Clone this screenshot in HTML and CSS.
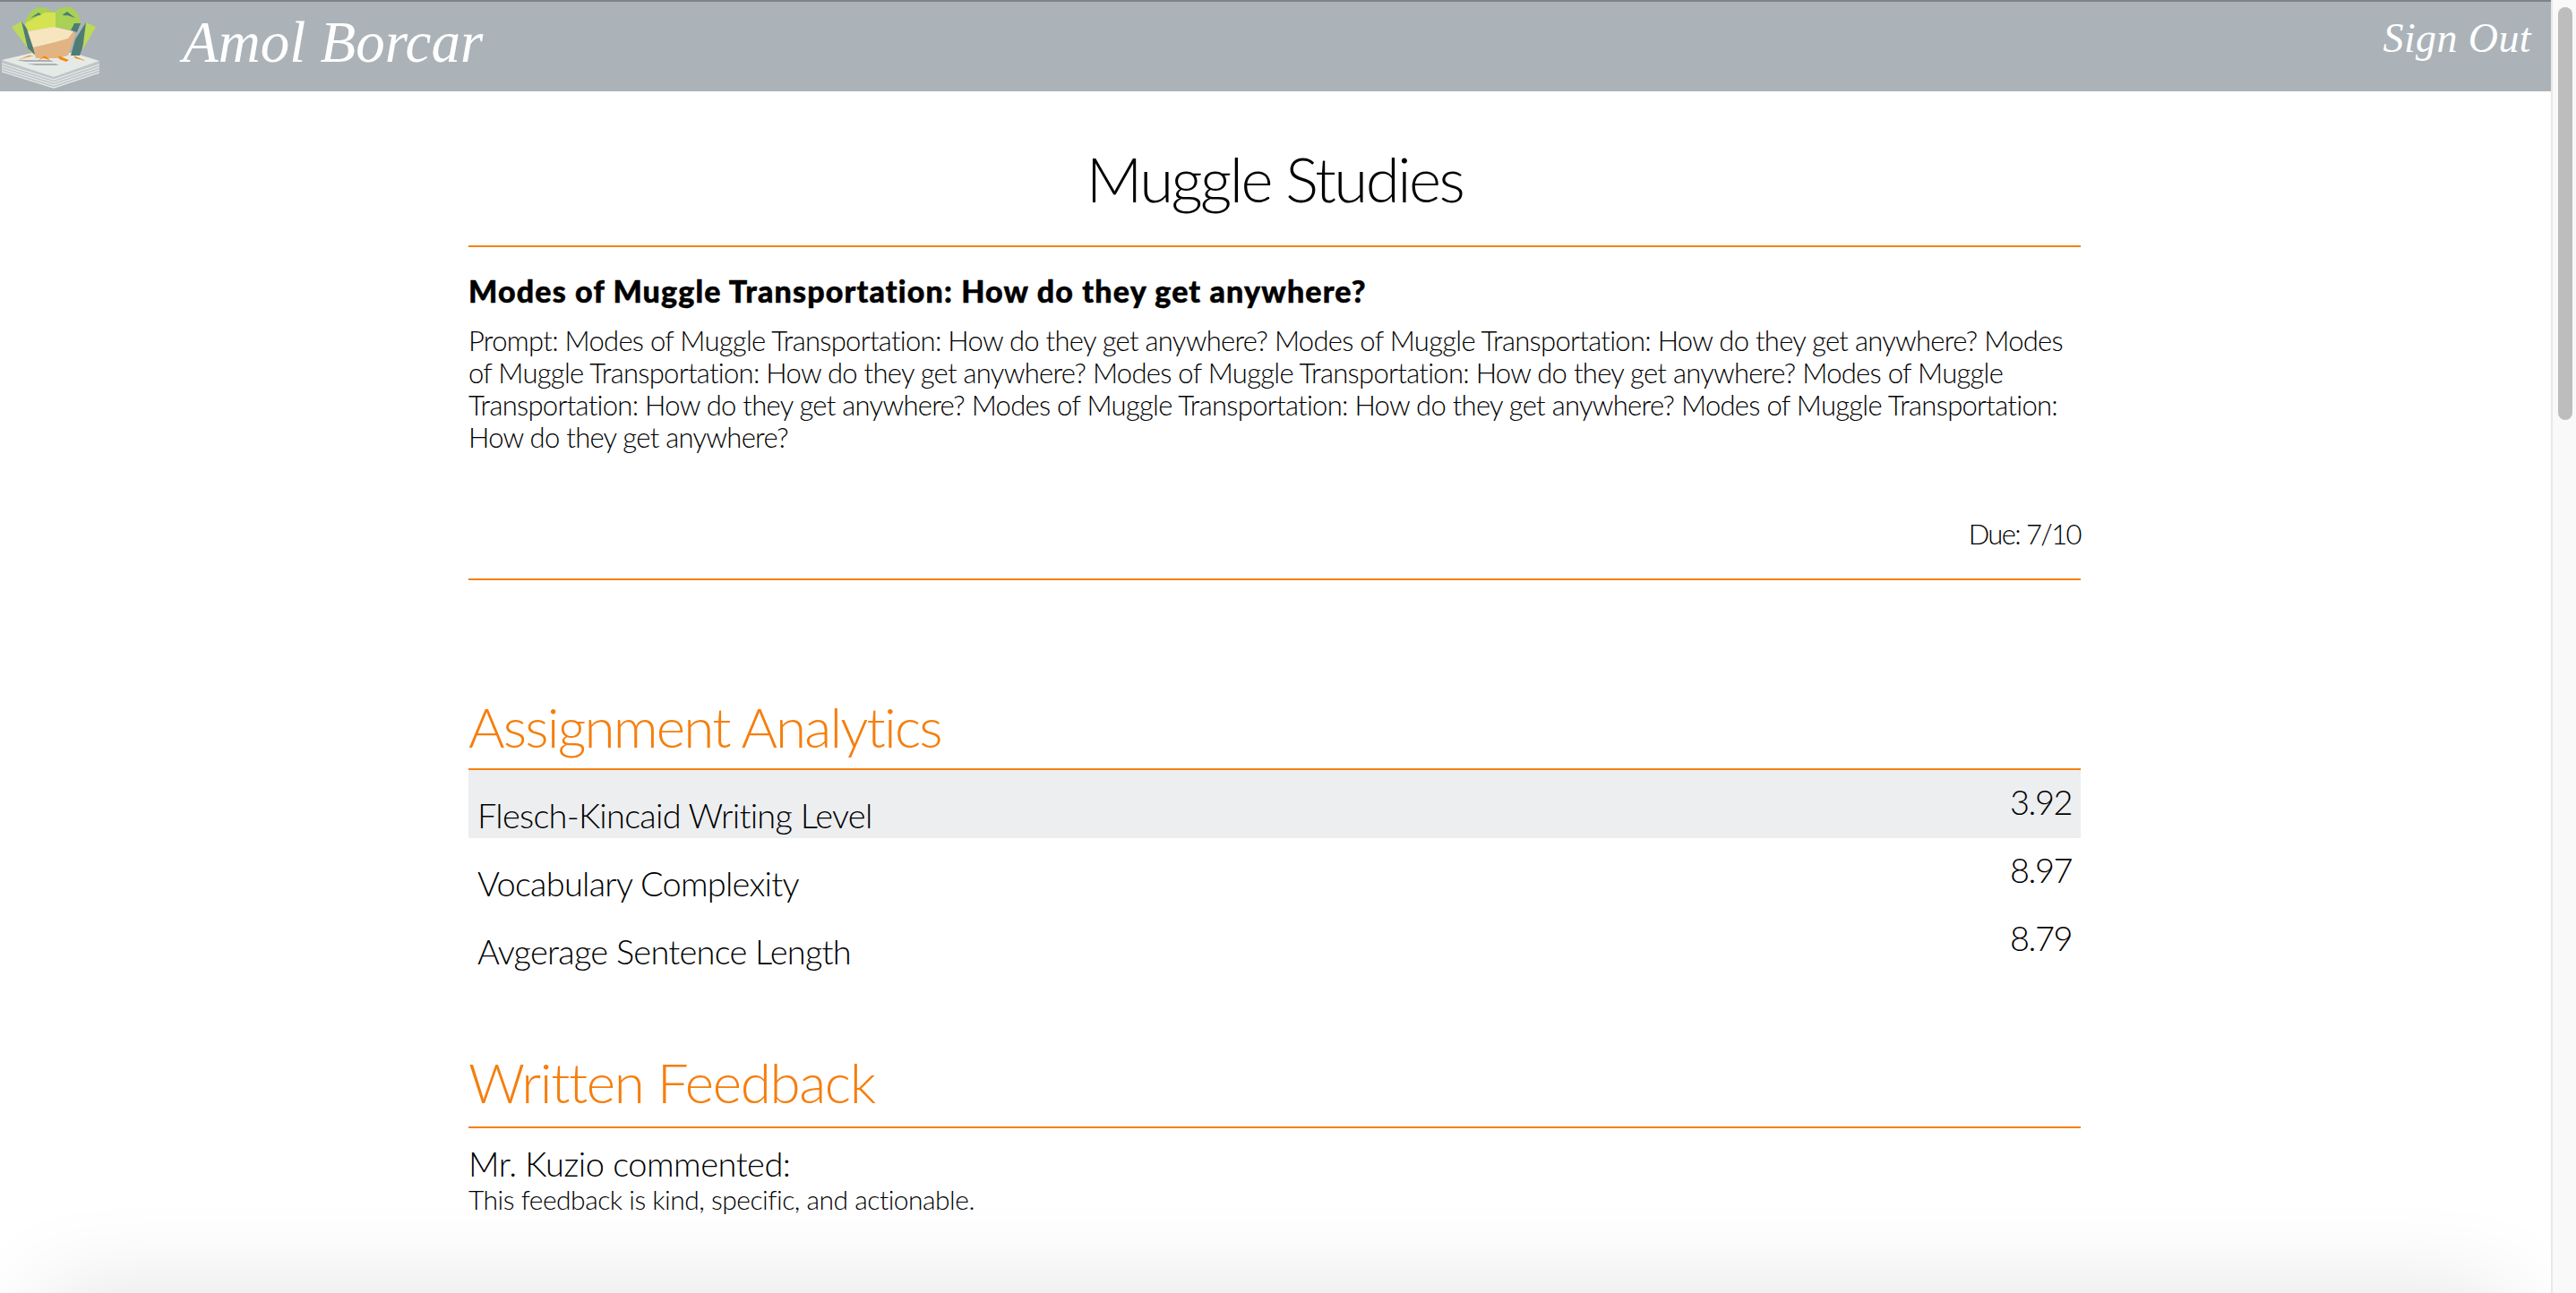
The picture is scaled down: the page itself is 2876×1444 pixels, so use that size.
FILE: index.html
```html
<!DOCTYPE html>
<html lang="en">
<head>
<meta charset="utf-8">
<title>Muggle Studies</title>
<link rel="stylesheet" href="styles.css">
</head>
<body>
<div class="viewport">
  <div class="page">
    <header class="topbar">
      <svg class="logo" viewBox="0 0 120 100" aria-hidden="true">
        <path fill="#bfc5c8" d="M2 65 L60 84 L111 66 L111 80 L60 96 L2 78Z"/>
        <path fill="none" stroke="#e6eae8" stroke-width="1.3" d="M2 69 L60 87 L111 70 M2 72 L60 90 L111 73 M2 75 L60 93 L111 76 M2 78 L60 96 L111 79"/>
        <path fill="#e6eae6" d="M2 65 L36 57 L82 57 L111 66 L60 84Z"/>
        <path fill="#aab1b6" d="M18 65 L56 65 L60 67 L28 67Z M30 69 L62 69 L66 71 L40 71Z"/>
        <path fill="#a9d155" d="M28 24 C30 13 38 6 46 6 C53 7 57 10 60 12 C64 8 71 5 78 6 C85 8 89 15 90 24 L60 30Z"/>
        <path fill="#4f7c74" d="M34 18 L43 12 L51 18 L43 15Z M66 17 L75 11 L84 18 L75 15Z"/>
        <path fill="#d5e352" d="M28 24 L50 12 L62 12 L62 28 L30 33Z"/>
        <path fill="#a9d155" d="M62 12 L80 18 L91 24 L84 33 L62 28Z"/>
        <path fill="#bcd958" d="M13 28 L24 22 L40 60 L34 56Z"/>
        <path fill="#4f7c74" d="M24 22 L30 30 L40 60 L31 52Z"/>
        <path fill="#4f7c74" d="M96 23 L100 28 L89 60 L79 60 L84 42Z"/>
        <path fill="#bcd958" d="M96 23 L107 28 L92 54Z"/>
        <path fill="#4f7c74" d="M83 24 L90 24 L86 34 L79 32Z"/>
        <path fill="#e2b482" d="M37 51 L62 45 L76 41 L82 33 L84 36 L76 60 L64 63 L40 63Z"/>
        <path fill="#f6e5bf" d="M31 33 L60 28 L82 33 L76 41 L62 45 L37 51Z"/>
        <path fill="#f58a12" d="M20 65 L32 60 L38 60 L30 62Z M42 66 L50 60 L56 65 L48 63Z M65 60 L77 65 L74 67 L66 64Z M82 60 L96 66 L84 63Z"/>
      </svg>
      <div class="brand">Amol Borcar</div>
      <a class="signout">Sign Out</a>
    </header>
    <main class="content">
      <h1 class="course">Muggle Studies</h1>
      <section class="assignment">
        <h2 class="assignment-title">Modes of Muggle Transportation: How do they get anywhere?</h2>
        <p class="prompt">Prompt: Modes of Muggle Transportation: How do they get anywhere? Modes of Muggle Transportation: How do they get anywhere? Modes of Muggle Transportation: How do they get anywhere? Modes of Muggle Transportation: How do they get anywhere? Modes of Muggle Transportation: How do they get anywhere? Modes of Muggle Transportation: How do they get anywhere? Modes of Muggle Transportation: How do they get anywhere?</p>
        <p class="due">Due: 7/10</p>
      </section>
      <h2 class="section-title analytics-title">Assignment Analytics</h2>
      <div class="metrics">
        <div class="metric metric-shaded"><span class="metric-name">Flesch-Kincaid Writing Level</span><span class="metric-value">3.92</span></div>
        <div class="metric"><span class="metric-name">Vocabulary Complexity</span><span class="metric-value">8.97</span></div>
        <div class="metric"><span class="metric-name">Avgerage Sentence Length</span><span class="metric-value">8.79</span></div>
      </div>
      <h2 class="section-title feedback-title">Written Feedback</h2>
      <p class="commenter">Mr. Kuzio commented:</p>
      <p class="comment">This feedback is kind, specific, and actionable.</p>
    </main>
    <div class="bottom-fade"></div>
  </div>
  <aside class="scrollbar"><div class="thumb"></div></aside>
</div>
</body>
</html>
```
FILE: styles.css
```css
* { box-sizing: border-box; }
html, body { margin: 0; height: 100%; overflow: hidden; background: #fff; }
body { font-family: "Lato", "Liberation Sans", sans-serif; font-weight: 300; color: #000; }
.viewport { display: flex; height: 1444px; }
.page { flex: 1; position: relative; overflow: hidden; }
.topbar { height: 102px; background: #abb3b9; border-top: 2px solid #7f8284; display: flex; align-items: flex-start; }
.logo { width: 120px; height: 100px; flex: none; }
.brand { margin: 7px 0 0 84px; font: italic 400 65px/76px "Liberation Serif", serif; color: #fff; }
.signout { margin: 8px 0 0 auto; padding-right: 22px; font: italic 400 46px/66px "Liberation Serif", serif; color: #fff; letter-spacing: .4px; }
.content { width: 1800px; margin: 0 auto; position: relative; left: -1px; }
.course { margin: 0; height: 174px; padding-top: 59px; border-bottom: 2px solid #f58113; text-align: center; font-size: 69px; line-height: 78px; font-weight: 300; letter-spacing: -2.5px; }
.assignment { border-bottom: 2px solid #f58113; height: 372px; padding-top: 30px; }
.assignment-title { margin: 0; font-size: 34px; line-height: 38px; font-weight: 900; letter-spacing: 1.15px; -webkit-text-stroke: .5px #000; }
.prompt { margin: 18px 0 0; font-size: 31px; line-height: 36px; letter-spacing: -.72px; }
.due { margin: 72px 0 0; text-align: right; font-size: 31px; line-height: 36px; letter-spacing: -1.6px; }
.section-title { margin: 0; color: #f57e0d; font-size: 62px; line-height: 72px; font-weight: 300; border-bottom: 2px solid #f58113; }
.analytics-title { margin-top: 125px; height: 87px; padding-top: 2px; letter-spacing: -1.85px; }
.metrics { display: flex; flex-direction: column; }
.metric { height: 76px; display: flex; justify-content: space-between; padding: 0 10px; font-size: 38px; }
.metric-shaded { background: #edeef0; }
.metric-name { line-height: 44px; margin-top: 28px; letter-spacing: -.76px; }
.metric-value { line-height: 44px; margin-top: 13px; letter-spacing: -1.5px; }
.feedback-title { margin-top: 84px; height: 88px; letter-spacing: -1.4px; }
.commenter { margin: 17px 0 0; font-size: 38px; line-height: 44px; letter-spacing: -.5px; }
.comment { margin: 0; font-size: 30px; line-height: 36px; letter-spacing: -.5px; }
.bottom-fade { position: absolute; left: 50px; right: 50px; bottom: -202px; height: 200px; box-shadow: 0 0 110px rgba(0, 0, 0, .12); }
.scrollbar { flex: none; width: 28px; background: #f9f9f9; border-left: 2px solid #e8e8e8; padding: 8px 4px 0 6px; }
.thumb { height: 461px; border-radius: 8px; background: #bdbdbd; }
```
